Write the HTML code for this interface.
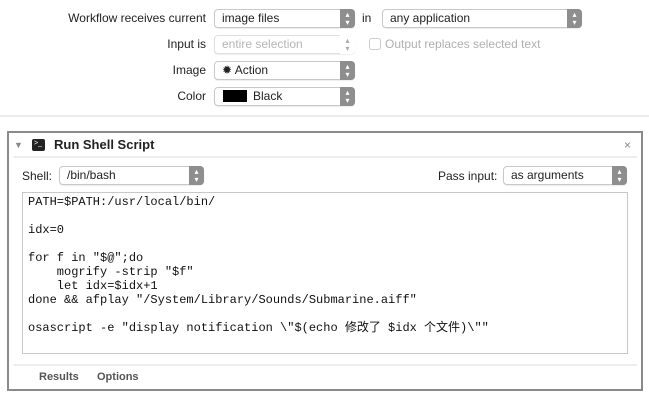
<!DOCTYPE html>
<html><head><meta charset="utf-8"><style>
*{margin:0;padding:0;box-sizing:border-box}
body{width:649px;height:401px;background:#fff;font-family:"Liberation Sans",sans-serif;font-size:12px;color:#222;position:relative;overflow:hidden}
.a{position:absolute}
.lbl{position:absolute;text-align:right;font-size:12px}
.pop{position:absolute;height:19px;border:1px solid #c8c8c8;border-radius:4px;background:#fff;font-size:12px;line-height:17px;padding-left:7px;box-shadow:0 1px 1px rgba(0,0,0,.08)}
.pop .st{position:absolute;right:-1px;top:-1px;width:15px;height:19px;background:#8e8e8e;border-radius:0 4px 4px 0;color:#fff;font-size:8px;line-height:8px;text-align:center;padding-top:2px}
.dis{color:#b5b5b5;border-color:#e0e0e0}
.dis .st{background:#fff;color:#aaa}
pre{font-family:"Liberation Mono","Noto Sans CJK SC",monospace;font-size:12px;line-height:14px;color:#111}
</style></head><body>
<div class="lbl" style="left:40px;top:11px;width:166px">Workflow receives current</div>
<div class="pop" style="left:214px;top:9px;width:141px">image files<div class="st">▴<br>▾</div></div>
<div class="a" style="left:362px;top:11px">in</div>
<div class="pop" style="left:382px;top:9px;width:200px">any application<div class="st">▴<br>▾</div></div>

<div class="lbl" style="left:100px;top:37px;width:106px">Input is</div>
<div class="pop dis" style="left:214px;top:35px;width:141px">entire selection<div class="st">▴<br>▾</div></div>
<div class="a" style="left:369px;top:38px;width:12px;height:12px;border:1px solid #ccc;border-radius:3px"></div>
<div class="a" style="left:385px;top:37px;color:#b0b0b0">Output replaces selected text</div>

<div class="lbl" style="left:100px;top:63px;width:106px">Image</div>
<div class="pop" style="left:214px;top:61px;width:141px">✹ Action<div class="st">▴<br>▾</div></div>
<div class="lbl" style="left:100px;top:89px;width:106px">Color</div>
<div class="pop" style="left:214px;top:87px;width:141px"><span style="display:inline-block;width:24px;height:12px;background:#000;vertical-align:-2px;margin-right:6px;margin-left:1px"></span>Black<div class="st">▴<br>▾</div></div>

<div class="a" style="left:0;top:115px;width:649px;height:2px;background:#ececec"></div>

<div class="a" style="left:7px;top:131px;width:636px;height:260px;border:2px solid #8a8a8a;background:#fff"></div>
<div class="a" style="left:14px;top:140px;font-size:9px;color:#888">▼</div>
<div class="a" style="left:32px;top:139px;width:13px;height:12px;background:#222;border-radius:2px"><div style="position:absolute;left:2px;top:1px;color:#fff;font-size:7px;line-height:7px">&gt;_</div></div>
<div class="a" style="left:54px;top:137px;font-size:13px;font-weight:bold">Run Shell Script</div>
<div class="a" style="left:624px;top:138px;color:#888;font-size:12px">×</div>
<div class="a" style="left:13px;top:156px;width:624px;height:2px;background:#eee"></div>

<div class="a" style="left:22px;top:169px">Shell:</div>
<div class="pop" style="left:59px;top:166px;width:145px">/bin/bash<div class="st">▴<br>▾</div></div>
<div class="a" style="left:438px;top:169px">Pass input:</div>
<div class="pop" style="left:503px;top:166px;width:124px">as arguments<div class="st">▴<br>▾</div></div>

<div class="a" style="left:22px;top:192px;width:606px;height:162px;border:1px solid #c8c8c8"></div>
<pre class="a" style="left:28px;top:195px">PATH=$PATH:/usr/local/bin/

idx=0

for f in "$@";do
    mogrify -strip "$f"
    let idx=$idx+1
done &amp;&amp; afplay "/System/Library/Sounds/Submarine.aiff"

osascript -e "display notification \"$(echo 修改了 $idx 个文件)\""</pre>

<div class="a" style="left:13px;top:364px;width:624px;height:2px;background:#eee"></div>
<div class="a" style="left:39px;top:371px;font-weight:bold;color:#555;font-size:11px">Results</div>
<div class="a" style="left:97px;top:371px;font-weight:bold;color:#555;font-size:11px">Options</div>
</body></html>
